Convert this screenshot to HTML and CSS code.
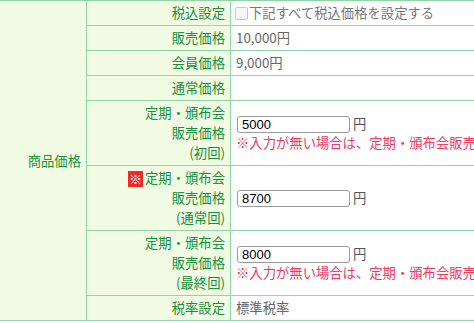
FILE: index.html
```html
<!DOCTYPE html>
<html lang="ja">
<head>
<meta charset="utf-8">
<link rel="stylesheet" href="styles.css">
</head>
<body>
<table class="price-table">
  <colgroup>
    <col class="c1"><col class="c2"><col class="c3">
  </colgroup>
  <tr class="r-s">
    <th class="group" rowspan="8">商品価格</th>
    <th class="label">税込設定</th>
    <td class="val"><label class="chk"><span class="box"></span>下記すべて税込価格を設定する</label></td>
  </tr>
  <tr class="r-s">
    <th class="label">販売価格</th>
    <td class="val">10,000円</td>
  </tr>
  <tr class="r-s">
    <th class="label">会員価格</th>
    <td class="val">9,000円</td>
  </tr>
  <tr class="r-s">
    <th class="label">通常価格</th>
    <td class="val"></td>
  </tr>
  <tr class="r-l">
    <th class="label multi">定期・頒布会<br>販売価格<br>(初回)</th>
    <td class="val">
      <div class="inrow"><span class="input">5000</span><span class="yen">円</span></div>
      <div class="note">※入力が無い場合は、定期・頒布会販売価格（通常回）が適用されます。</div>
    </td>
  </tr>
  <tr class="r-l">
    <th class="label multi"><span class="req">※</span>定期・頒布会<br>販売価格<br>(通常回)</th>
    <td class="val">
      <div class="inrow"><span class="input">8700</span><span class="yen">円</span></div>
    </td>
  </tr>
  <tr class="r-l">
    <th class="label multi">定期・頒布会<br>販売価格<br>(最終回)</th>
    <td class="val">
      <div class="inrow"><span class="input">8000</span><span class="yen">円</span></div>
      <div class="note">※入力が無い場合は、定期・頒布会販売価格（通常回）が適用されます。</div>
    </td>
  </tr>
  <tr class="r-s">
    <th class="label">税率設定</th>
    <td class="val">標準税率</td>
  </tr>
</table>
</body>
</html>
```
FILE: styles.css
```css
html, body {
  margin: 0;
  padding: 0;
  background: #fff;
  overflow: hidden;
}
body {
  font-family: "Noto Sans CJK JP", "Noto Sans", sans-serif;
  font-size: 13.33px;
  width: 474px;
  height: 323px;
}
.price-table {
  border-collapse: collapse;
  table-layout: fixed;
  width: 700px;
  margin-left: -1px;
}
.c1 { width: 87px; }
.c2 { width: 144px; }
.c3 { width: 470px; }
.price-table th,
.price-table td {
  border: 1px solid #8fd5a5;
  padding: 0 5px;
  vertical-align: middle;
  line-height: 20px;
  white-space: nowrap;
  overflow: hidden;
}
.price-table th {
  font-weight: normal;
  color: #16913a;
  text-align: right;
  background-color: #f7fbef;
  background-image: repeating-conic-gradient(#e3f4c6 0 25%, #ffffff 0 50%);
  background-size: 2px 2px;
}
.r-s { height: 25px; }
.r-l { height: 65px; }
.val {
  color: #666;
  background: #fff;
  text-align: left;
}
.chk {
  display: flex;
  align-items: center;
  color: #777;
}
.box {
  width: 13px;
  height: 13px;
  border: 1px solid #c8c8c8;
  border-radius: 2px;
  background: #f6f6f6;
  margin: 0 1px 0 -1px;
  box-sizing: border-box;
}
.inrow {
  display: flex;
  align-items: center;
  height: 20px;
}
.input {
  display: block;
  box-sizing: border-box;
  width: 113px;
  height: 17px;
  border: 1px solid #999;
  border-radius: 3px;
  padding: 0 4px;
  line-height: 15px;
  color: #000;
  font-family: "Liberation Sans", Arial, sans-serif;
  font-size: 13px;
  margin-left: 1px;
}
.yen {
  margin-left: 3px;
  color: #555;
}
.note {
  color: #f03a5f;
  line-height: 18px;
}
.req {
  display: inline-block;
  width: 15px;
  height: 16px;
  line-height: 16px;
  text-align: center;
  background: #ee2a2a;
  color: #fff;
  font-size: 13px;
  vertical-align: -1px;
  margin-right: 2px;
}
```
